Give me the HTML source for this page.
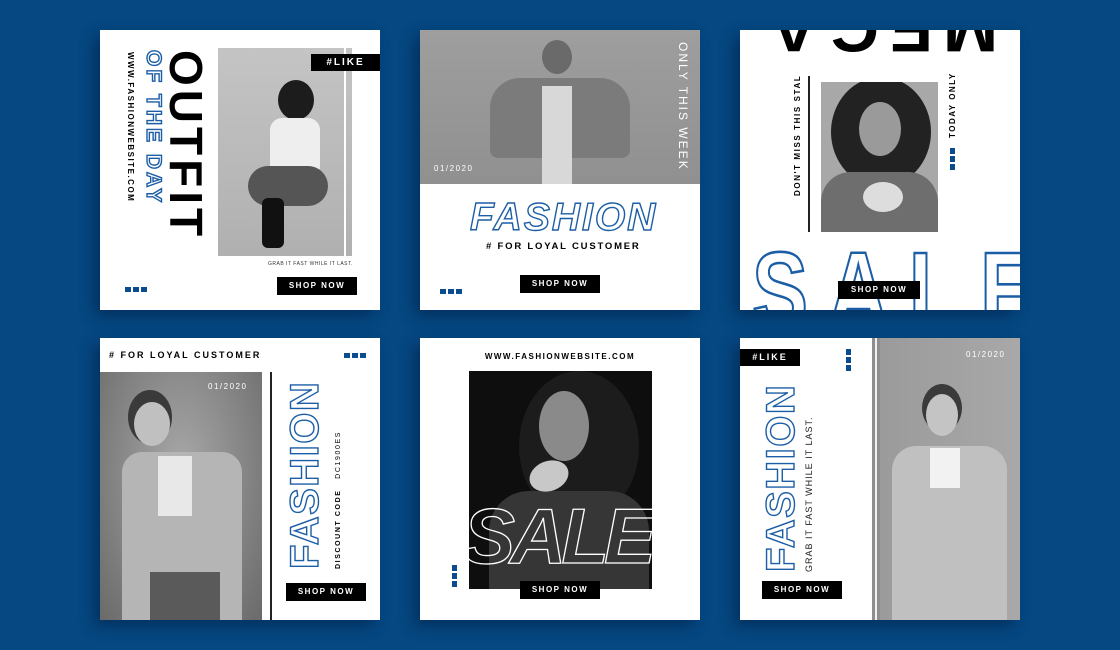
<!DOCTYPE html>
<html><head><meta charset="utf-8"><style>
*{margin:0;padding:0;box-sizing:border-box}
body{width:1120px;height:650px;background:#054882;position:relative;overflow:hidden;font-family:"Liberation Sans",sans-serif}
.c{position:absolute;background:#fff;overflow:hidden;box-shadow:-6px 6px 14px rgba(0,20,50,.45)}
.a{position:absolute}
.btn{position:absolute;background:#000;color:#fff;font-weight:bold;font-size:8px;letter-spacing:1.5px;text-align:center;line-height:18px;height:18px;width:80px}
.dots{position:absolute;display:flex;gap:2px}
.dots i{display:block;width:6px;height:5px;background:#0b4c8e}
.dv{flex-direction:column}
.dv i{width:5px;height:6px}
.ol{color:transparent;-webkit-text-stroke:1.4px #1c5ea6;font-weight:900}
.rot{position:absolute;transform-origin:0 0;white-space:nowrap}
.cw{transform:rotate(90deg)}
.ccw{transform:rotate(-90deg)}
.ph{position:absolute;overflow:hidden}
.sm{font-weight:bold;letter-spacing:2px}
</style></head><body>

<!-- Card 1 -->
<div class="c" style="left:100px;top:30px;width:280px;height:280px">
  <div class="ph" style="left:118px;top:18px;width:134px;height:208px;background:linear-gradient(#c4c4c4,#b0b0b0)">
    <div class="a" style="left:60px;top:32px;width:36px;height:40px;border-radius:50%;background:#1c1c1c"></div>
    <div class="a" style="left:52px;top:70px;width:50px;height:60px;border-radius:12px;background:#eee"></div>
    <div class="a" style="left:30px;top:118px;width:80px;height:40px;border-radius:20px;background:#555"></div>
    <div class="a" style="left:44px;top:150px;width:22px;height:50px;border-radius:6px;background:#111"></div>
    <div class="a" style="left:126px;top:0;width:2px;height:208px;background:#fff"></div>
  </div>
  <div class="a" style="left:211px;top:24px;width:69px;height:17px;background:#000;color:#fff;font-weight:bold;font-size:10px;letter-spacing:2px;line-height:17px;text-align:center">#LIKE</div>
  <div class="rot cw" style="left:104px;top:20px;font-size:46px;font-weight:900;letter-spacing:4px;line-height:36px">OUTFIT</div>
  <div class="rot cw ol" style="left:62px;top:20px;font-size:21px;letter-spacing:3px;line-height:18px">OF THE DAY</div>
  <div class="rot cw" style="left:35px;top:22px;font-size:8px;font-weight:bold;letter-spacing:1.5px;line-height:9px">WWW.FASHIONWEBSITE.COM</div>
  <div class="a" style="left:168px;top:231px;font-size:5px;letter-spacing:.5px;color:#333">GRAB IT FAST WHILE IT LAST.</div>
  <div class="btn" style="left:177px;top:247px">SHOP NOW</div>
  <div class="dots" style="left:25px;top:257px"><i></i><i></i><i></i></div>
</div>

<!-- Card 2 -->
<div class="c" style="left:420px;top:30px;width:280px;height:280px">
  <div class="ph" style="left:0;top:0;width:280px;height:154px;background:linear-gradient(#9e9e9e,#909090)">
    <div class="a" style="left:122px;top:10px;width:30px;height:34px;border-radius:50%;background:#6a6a6a"></div>
    <div class="a" style="left:70px;top:48px;width:140px;height:80px;border-radius:30px 30px 8px 8px;background:#7b7b7b"></div>
    <div class="a" style="left:122px;top:56px;width:30px;height:98px;background:#d8d8d8"></div>
  </div>
  <div class="rot cw" style="left:269px;top:12px;color:#fff;font-size:12px;letter-spacing:2px;line-height:12px">ONLY THIS WEEK</div>
  <div class="a" style="left:14px;top:134px;color:#fff;font-size:8px;letter-spacing:1.5px">01/2020</div>
  <div class="a ol" style="left:50px;top:168px;font-size:39px;font-style:italic;letter-spacing:2px;line-height:40px">FASHION</div>
  <div class="a sm" style="left:66px;top:211px;font-size:9.5px;letter-spacing:1.8px">#&nbsp;FOR LOYAL CUSTOMER</div>
  <div class="btn" style="left:100px;top:245px">SHOP NOW</div>
  <div class="dots" style="left:20px;top:259px"><i></i><i></i><i></i></div>
</div>

<!-- Card 3 -->
<div class="c" style="left:740px;top:30px;width:280px;height:280px">
  <div class="a" style="left:14px;top:-34px;width:250px;transform:rotate(180deg);font-size:66px;font-weight:900;letter-spacing:10px;line-height:66px;text-align:center">MEGA</div>
  <div class="rot ccw" style="left:53px;top:166px;font-size:8px;font-weight:bold;letter-spacing:1.6px;line-height:9px">DON'T MISS THIS STAL</div>
  <div class="a" style="left:68px;top:46px;width:2px;height:156px;background:#222"></div>
  <div class="ph" style="left:81px;top:52px;width:117px;height:150px;background:#a8a8a8">
    <div class="a" style="left:10px;top:-5px;width:100px;height:110px;border-radius:50%;background:#222"></div>
    <div class="a" style="left:38px;top:20px;width:42px;height:54px;border-radius:50%;background:#9a9a9a"></div>
    <div class="a" style="left:0;top:90px;width:117px;height:70px;border-radius:30px 30px 0 0;background:#6e6e6e"></div>
    <div class="a" style="left:42px;top:100px;width:40px;height:30px;border-radius:50%;background:#ddd"></div>
  </div>
  <div class="rot ccw" style="left:208px;top:108px;font-size:8px;font-weight:bold;letter-spacing:1.5px;line-height:9px">TODAY ONLY</div>
  <div class="dots dv" style="left:210px;top:118px"><i></i><i></i><i></i></div>
  <div class="a ol" style="left:12px;top:206px;font-size:84px;letter-spacing:20px;line-height:84px;-webkit-text-stroke:2px #1c5ea6;font-weight:bold;transform:scaleY(1.3);transform-origin:0 0">SALE</div>
  <div class="btn" style="left:98px;top:251px;width:82px">SHOP NOW</div>
</div>

<!-- Card 4 -->
<div class="c" style="left:100px;top:338px;width:280px;height:282px">
  <div class="a sm" style="left:9px;top:12px;font-size:9px">#&nbsp;FOR LOYAL CUSTOMER</div>
  <div class="dots" style="left:244px;top:15px"><i></i><i></i><i></i></div>
  <div class="ph" style="left:0;top:34px;width:162px;height:248px;background:radial-gradient(ellipse at 50% 40%,#a8a8a8,#6a6a6a)">
    <div class="a" style="left:28px;top:18px;width:44px;height:54px;border-radius:50%;background:#3a3a3a"></div>
    <div class="a" style="left:34px;top:30px;width:36px;height:44px;border-radius:50%;background:#c0c0c0"></div>
    <div class="a" style="left:22px;top:80px;width:120px;height:170px;border-radius:20px 20px 0 0;background:#b5b5b5"></div>
    <div class="a" style="left:58px;top:84px;width:34px;height:60px;background:#e8e8e8"></div>
    <div class="a" style="left:50px;top:200px;width:70px;height:50px;background:#5a5a5a"></div>
  </div>
  <div class="a" style="left:108px;top:44px;color:#fff;font-size:8px;letter-spacing:1.5px">01/2020</div>
  <div class="a" style="left:170px;top:34px;width:2px;height:248px;background:#222"></div>
  <div class="rot ccw ol" style="left:188px;top:231px;font-size:40px;letter-spacing:1.5px;line-height:34px">FASHION</div>
  <div class="rot ccw" style="left:234px;top:231px;font-size:7px;letter-spacing:1.6px;line-height:9px"><b>DISCOUNT CODE</b>&nbsp;&nbsp; DC1900ES</div>
  <div class="btn" style="left:186px;top:245px">SHOP NOW</div>
</div>

<!-- Card 5 -->
<div class="c" style="left:420px;top:338px;width:280px;height:282px">
  <div class="a sm" style="left:0;width:280px;text-align:center;top:14px;font-size:8px;letter-spacing:1.5px">WWW.FASHIONWEBSITE.COM</div>
  <div class="ph" style="left:49px;top:33px;width:183px;height:218px;background:#0e0e0e">
    <div class="a" style="left:50px;top:0;width:120px;height:150px;border-radius:50%;background:#1c1c1c"></div>
    <div class="a" style="left:70px;top:20px;width:50px;height:70px;border-radius:50%;background:#8a8a8a"></div>
    <div class="a" style="left:20px;top:120px;width:160px;height:110px;border-radius:40px 40px 0 0;background:#363636"></div>
    <div class="a" style="left:60px;top:90px;width:40px;height:30px;border-radius:50%;background:#c8c8c8;transform:rotate(-20deg)"></div>
    <div class="a" style="left:-6px;top:126px;font-size:78px;font-style:italic;font-weight:900;color:transparent;-webkit-text-stroke:1.3px #fff;letter-spacing:-5px;line-height:78px;white-space:nowrap">SALE</div>
  </div>
  <div class="btn" style="left:100px;top:243px">SHOP NOW</div>
  <div class="dots dv" style="left:32px;top:227px"><i></i><i></i><i></i></div>
</div>

<!-- Card 6 -->
<div class="c" style="left:740px;top:338px;width:280px;height:282px">
  <div class="ph" style="left:132px;top:0;width:148px;height:282px;background:linear-gradient(90deg,#9a9a9a,#a8a8a8)">
    <div class="a" style="left:0;top:0;width:8px;height:282px;background:#8e8e8e"></div>
    <div class="a" style="left:3px;top:0;width:2px;height:282px;background:#f0f0f0"></div>
    <div class="a" style="left:50px;top:46px;width:40px;height:48px;border-radius:50%;background:#3a3a3a"></div>
    <div class="a" style="left:54px;top:56px;width:32px;height:42px;border-radius:50%;background:#c4c4c4"></div>
    <div class="a" style="left:20px;top:108px;width:115px;height:174px;border-radius:24px 24px 0 0;background:#c0c0c0"></div>
    <div class="a" style="left:58px;top:110px;width:30px;height:40px;background:#f2f2f2"></div>
  </div>
  <div class="a" style="left:226px;top:12px;color:#fff;font-size:8px;letter-spacing:1.5px">01/2020</div>
  <div class="a" style="left:0;top:11px;width:60px;height:17px;background:#000;color:#fff;font-weight:bold;font-size:9px;letter-spacing:2px;line-height:17px;text-align:center">#LIKE</div>
  <div class="dots dv" style="left:106px;top:11px"><i></i><i></i><i></i></div>
  <div class="rot ccw ol" style="left:24px;top:234px;font-size:40px;letter-spacing:1.5px;line-height:34px">FASHION</div>
  <div class="rot ccw" style="left:64px;top:234px;font-size:9px;letter-spacing:1px;line-height:10px;color:#222">GRAB IT FAST WHILE IT LAST.</div>
  <div class="btn" style="left:22px;top:243px">SHOP NOW</div>
</div>

</body></html>
